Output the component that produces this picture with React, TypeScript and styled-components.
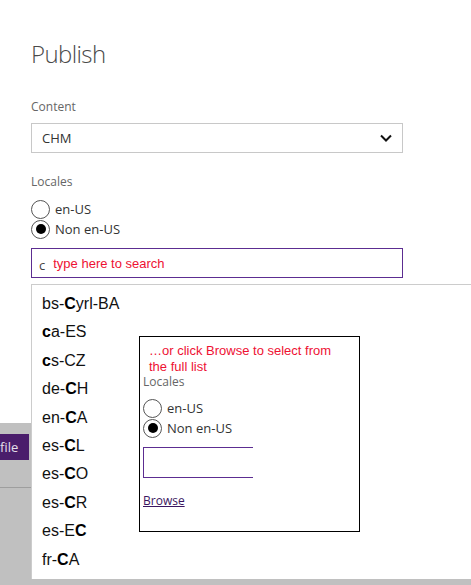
import React from "react";
import styled, { createGlobalStyle } from "styled-components";

const Global = createGlobalStyle`
  html, body { margin: 0; padding: 0; background: #fff; }
  body { font-family: "Open Sans", "Noto Sans", sans-serif; }
  * { box-sizing: border-box; }
`;

const Page = styled.div`
  position: relative;
  width: 471px;
  height: 585px;
  overflow: hidden;
  display: flex;
  flex-direction: column;
`;

const Form = styled.div`
  height: 423px;
  padding: 38px 0 0 31px;
  display: flex;
  flex-direction: column;
  background: #fff;
`;

const Title = styled.h1`
  margin: 0;
  font-size: 24px;
  font-weight: 300;
  line-height: 32px;
  letter-spacing: -0.6px;
  color: #4a4a4a;
`;

const FieldLabel = styled.div<{ $mt: number }>`
  margin-top: ${(p) => p.$mt}px;
  font-size: 12px;
  line-height: 18px;
  color: #666;
`;

const Select = styled.div`
  margin-top: 7px;
  width: 372px;
  height: 30px;
  border: 1px solid #c8c8c8;
  display: flex;
  align-items: center;
  justify-content: space-between;
  padding: 0 10px 0 10px;
  font-size: 13px;
  color: #333;
`;

const RadioGroup = styled.div<{ $mt: number }>`
  margin-top: ${(p) => p.$mt}px;
  display: flex;
  flex-direction: column;
`;

const RadioRow = styled.label`
  display: flex;
  align-items: center;
  height: 20px;
  gap: 5px;
  font-size: 13px;
  color: #333;
`;

const RadioCircle = styled.span<{ $checked?: boolean }>`
  width: 19px;
  height: 19px;
  border-radius: 50%;
  border: 1px solid #555;
  display: flex;
  align-items: center;
  justify-content: center;
  flex: none;
  &::after {
    content: "";
    width: 10px;
    height: 10px;
    border-radius: 50%;
    background: ${(p) => (p.$checked ? "#000" : "transparent")};
  }
`;

const Combo = styled.div`
  position: relative;
  margin-top: 9px;
  width: 372px;
`;

const SearchBox = styled.div`
  height: 30px;
  border: 1px solid #5c2d91;
  display: flex;
  align-items: center;
  padding-left: 7px;
  gap: 8px;
`;

const Typed = styled.span`
  font-size: 13px;
  color: #444;
  margin-top: 3px;
`;

const Hint = styled.span`
  font-family: "Liberation Sans", Arial, sans-serif;
  font-size: 13px;
  color: #ee1133;
`;

const ListPopup = styled.ul`
  position: absolute;
  top: 36px;
  left: 0;
  width: 460px;
  height: 295px;
  margin: 0;
  padding: 5px 0 0 10px;
  list-style: none;
  background: #fff;
  border-top: 1px solid #ccc;
  border-left: 1px solid #ccc;
  z-index: 2;
  overflow: hidden;
`;

const ListItem = styled.li`
  height: 28.4px;
  line-height: 28px;
  font-family: "Liberation Sans", Arial, sans-serif;
  font-size: 16px;
  color: #111;
  b { font-weight: bold; color: #000; }
`;

const Footer = styled.div`
  flex: 1;
  background: #c0c0c0;
  padding-top: 11px;
  display: flex;
  flex-direction: column;
`;

const FileButton = styled.div`
  width: 29px;
  height: 26px;
  background: #4a1d6b;
  color: #e6e0ea;
  font-size: 13px;
  line-height: 26px;
  padding-left: 0;
  white-space: nowrap;
  overflow: hidden;
`;

const Divider = styled.div`
  margin-top: 27px;
  width: 32px;
  height: 1px;
  background: #9e9e9e;
`;

const Callout = styled.div`
  position: absolute;
  left: 139px;
  top: 336px;
  width: 221px;
  height: 196px;
  border: 1px solid #000;
  background: #fff;
  z-index: 3;
  padding: 6px 0 0 3px;
  display: flex;
  flex-direction: column;
`;

const CalloutHint = styled.div`
  padding-left: 6px;
  width: 205px;
  font-family: "Liberation Sans", Arial, sans-serif;
  font-size: 13px;
  line-height: 16px;
  color: #ee1133;
`;

const CalloutLabel = styled.div`
  font-size: 12px;
  line-height: 14px;
  color: #666;
`;

const MiniInput = styled.div`
  margin-top: 9px;
  width: 110px;
  height: 31px;
  border: 1px solid #5c2d91;
  border-right: none;
`;

const BrowseLink = styled.a`
  margin-top: 15px;
  font-size: 12px;
  line-height: 16px;
  color: #3a1560;
  text-decoration: underline;
`;

const Chevron = () => (
  <svg width="12" height="8" viewBox="0 0 12 8">
    <path d="M1 1.5 L6 6.5 L11 1.5" fill="none" stroke="#111" strokeWidth="2" />
  </svg>
);

const Radio = ({ label, checked }: { label: string; checked?: boolean }) => (
  <RadioRow>
    <RadioCircle $checked={checked} />
    {label}
  </RadioRow>
);

const locales: [string, string, string][] = [
  ["bs-", "C", "yrl-BA"],
  ["", "c", "a-ES"],
  ["", "c", "s-CZ"],
  ["de-", "C", "H"],
  ["en-", "C", "A"],
  ["es-", "C", "L"],
  ["es-", "C", "O"],
  ["es-", "C", "R"],
  ["es-E", "C", ""],
  ["fr-", "C", "A"],
];

export default function App() {
  return (
    <Page>
      <Global />
      <Form>
        <Title>Publish</Title>
        <FieldLabel $mt={28}>Content</FieldLabel>
        <Select>
          <span>CHM</span>
          <Chevron />
        </Select>
        <FieldLabel $mt={20}>Locales</FieldLabel>
        <RadioGroup $mt={8}>
          <Radio label="en-US" />
          <Radio label="Non en-US" checked />
        </RadioGroup>
        <Combo>
          <SearchBox>
            <Typed>c</Typed>
            <Hint>type here to search</Hint>
          </SearchBox>
          <ListPopup>
            {locales.map(([a, b, c], i) => (
              <ListItem key={i}>
                {a}
                <b>{b}</b>
                {c}
              </ListItem>
            ))}
          </ListPopup>
        </Combo>
      </Form>
      <Footer>
        <FileButton>file</FileButton>
        <Divider />
      </Footer>
      <Callout>
        <CalloutHint>…or click Browse to select from the full list</CalloutHint>
        <CalloutLabel>Locales</CalloutLabel>
        <RadioGroup $mt={9}>
          <Radio label="en-US" />
          <Radio label="Non en-US" checked />
        </RadioGroup>
        <MiniInput />
        <BrowseLink href="#">Browse</BrowseLink>
      </Callout>
    </Page>
  );
}
